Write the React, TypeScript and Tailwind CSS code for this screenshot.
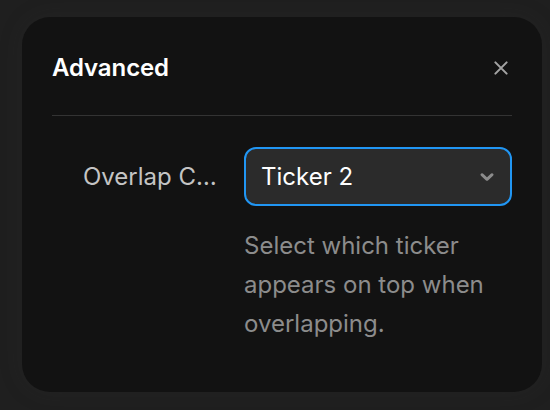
import React from 'react';

const App: React.FC = () => {
  return (
    <div className="w-[550px] h-[410px] bg-[#1f1f1f] pt-[17px] pl-[22px]" style={{ fontFamily: 'Inter, "Noto Sans", sans-serif' }}>
      <div className="w-[520px] h-[375px] bg-[#121212] rounded-[28px] px-[30px] shadow-[0_0_24px_rgba(60,60,60,0.15)]">
        <div className="flex items-center justify-between h-[99px] border-b border-[#333333] pt-[4px]">
          <h2 className="text-[24px] font-semibold text-white tracking-[-0.1px]">Advanced</h2>
          <button className="text-[#a3a3a3] mr-[2px]">
            <svg width="18" height="18" viewBox="0 0 24 24" fill="none" stroke="currentColor" strokeWidth="2.8" strokeLinecap="round">
              <path d="M4.5 4.5l15 15M19.5 4.5l-15 15" />
            </svg>
          </button>
        </div>
        <div className="flex items-start pt-[31px] pl-[31px]">
          <div className="w-[138px] h-[59px] flex items-center text-[24px] text-[#c4c4c4]">
            <span className="truncate">Overlap Control</span>
          </div>
          <div className="ml-[23px] flex-1">
            <div className="h-[59px] rounded-[12px] border-2 border-[#2196f3] bg-[#2b2b2b] flex items-center justify-between pl-[15px] pr-[12px]">
              <span className="text-[24px] text-white">Ticker 2</span>
              <svg width="22" height="22" viewBox="0 0 24 24" fill="none" stroke="#8c8c8c" strokeWidth="3.2" strokeLinecap="round" strokeLinejoin="round">
                <path d="M6.5 9.5l5.5 5 5.5-5" />
              </svg>
            </div>
            <p className="mt-[20px] text-[24px] leading-[39px] text-[#8c8c8c]">
              Select which ticker appears on top when overlapping.
            </p>
          </div>
        </div>
      </div>
    </div>
  );
};

export default App;
